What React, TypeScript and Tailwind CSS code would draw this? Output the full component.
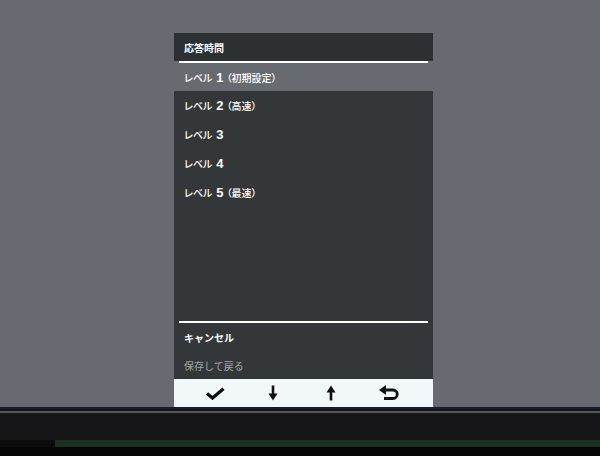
import React from 'react';

const jp = { fontFamily: '"Noto Sans CJK JP", "Noto Sans", sans-serif' };

const CheckIcon = () => (
  <svg width="20" height="13" viewBox="0 0 20 13">
    <path d="M2 6.5 L7.5 11 L18.5 1.8" fill="none" stroke="#111" strokeWidth="3.4" strokeLinejoin="miter" />
  </svg>
);

const DownIcon = () => (
  <svg width="10" height="16" viewBox="0 0 10 16">
    <line x1="5" y1="0.5" x2="5" y2="10" stroke="#111" strokeWidth="2.6" />
    <polygon points="0.5,8.5 9.5,8.5 5,15.5" fill="#111" />
  </svg>
);

const UpIcon = () => (
  <svg width="10" height="16" viewBox="0 0 10 16">
    <line x1="5" y1="6" x2="5" y2="15.5" stroke="#111" strokeWidth="2.6" />
    <polygon points="0.5,7.5 9.5,7.5 5,0.5" fill="#111" />
  </svg>
);

const ReturnIcon = () => (
  <svg width="20" height="16" viewBox="0 0 20 16">
    <polygon points="0,5 7,0 7,10" fill="#111" />
    <path d="M6 5 H14 A4 4 0 0 1 14 13.5 H5" fill="none" stroke="#111" strokeWidth="2.8" />
  </svg>
);

const levels = [
  { n: '2', note: '（高速）' },
  { n: '3', note: '' },
  { n: '4', note: '' },
  { n: '5', note: '（最速）' },
];

const LevelLabel = ({ n, note }: { n: string; note: string }) => (
  <span className="flex items-center text-[10px] font-medium text-white [font-feature-settings:'palt']">
    レベル
    <span className="ml-[4px] mr-[3px] text-[13px] font-bold leading-none font-['Liberation_Sans',sans-serif]">{n}</span>
    {note && <span className="text-[10px]">{note}</span>}
  </span>
);

export default function App() {
  return (
    <div className="w-[600px] h-[456px] overflow-hidden flex flex-col bg-[#050506]" style={jp}>
      {/* screen */}
      <div className="h-[407px] bg-[#676a71] pt-[33px] pl-[174px]">
        <div className="w-[259px] flex flex-col">
          {/* title */}
          <div className="h-[28px] bg-[#2c3033] flex items-center pl-[10px] text-[10px] font-bold text-white">
            応答時間
          </div>
          <div className="h-[2px] mx-[5px] bg-white" />

          {/* selected row */}
          <div className="h-[28px] flex items-center pl-[10px]">
            <LevelLabel n="1" note="（初期設定）" />
          </div>

          {/* body */}
          <div className="h-[288px] bg-[#33373a] flex flex-col">
            {levels.map((l) => (
              <div key={l.n} className="h-[29px] flex items-center pl-[10px]">
                <LevelLabel n={l.n} note={l.note} />
              </div>
            ))}
            <div className="flex-1" />
            <div className="h-[2px] mx-[5px] bg-white" />
            <div className="h-[28px] flex items-center pl-[10px] text-[10px] font-bold text-white">
              キャンセル
            </div>
            <div className="h-[28px] flex items-center pl-[10px] text-[10px] text-[#a3a7aa]">
              保存して戻る
            </div>
          </div>

          {/* button bar */}
          <div className="h-[28px] bg-[#f2f8fa] flex items-center pl-[12px]">
            <div className="w-[58px] flex justify-center"><CheckIcon /></div>
            <div className="w-[58px] flex justify-center"><DownIcon /></div>
            <div className="w-[58px] flex justify-center"><UpIcon /></div>
            <div className="w-[58px] flex justify-center"><ReturnIcon /></div>
          </div>
        </div>
      </div>

      {/* bezel */}
      <div className="h-[2px] bg-[#1b1a2c]" />
      <div className="h-[2px] bg-[#141416]" />
      <div className="h-[2px] bg-[#56575c]" />
      <div className="h-[27px] bg-[#161618]" />
      <div className="h-[7px] flex">
        <div className="w-[55px] bg-[#0b0c0c]" />
        <div className="flex-1 bg-[#1c2e1f]" />
      </div>
      <div className="flex-1 bg-[#050506]" />
    </div>
  );
}
